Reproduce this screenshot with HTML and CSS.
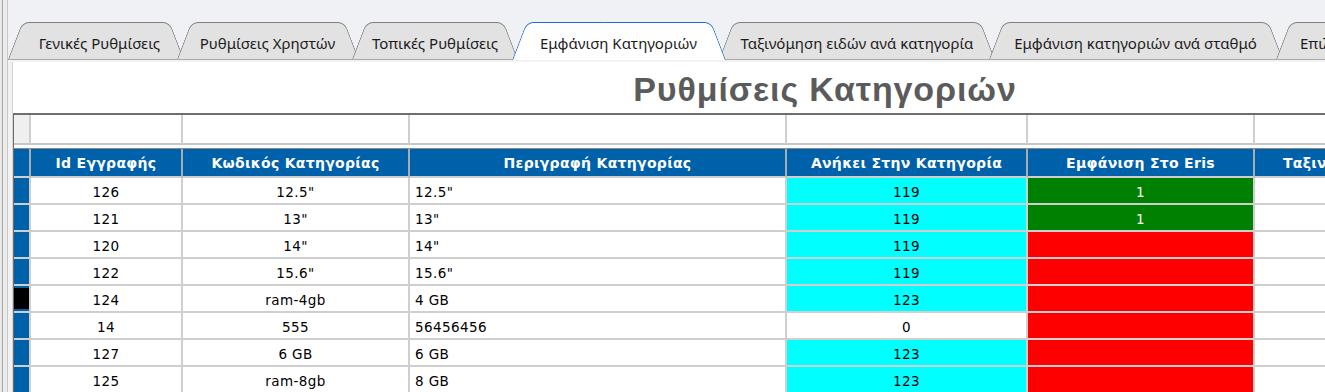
FILE: index.html
```html
<!DOCTYPE html>
<html lang="el">
<head>
<meta charset="utf-8">
<title>Ρυθμίσεις Κατηγοριών</title>
<link rel="stylesheet" href="styles.css">
</head>
<body>
<div class="app">
  <div class="sidebar"></div>
  <div class="tabcontrol">
    <div class="tabs">
      <div class="tab t1">Γενικές Ρυθμίσεις</div>
      <div class="tab t2">Ρυθμίσεις Χρηστών</div>
      <div class="tab t3">Τοπικές Ρυθμίσεις</div>
      <div class="tab t4 active">Εμφάνιση Κατηγοριών</div>
      <div class="tab t5">Ταξινόμηση ειδών ανά κατηγορία</div>
      <div class="tab t6">Εμφάνιση κατηγοριών ανά σταθμό</div>
      <div class="tab t7">Επιλογές</div>
    </div>
    <div class="page">
      <div class="content">
        <div class="title">Ρυθμίσεις Κατηγοριών</div>
        <div class="grid">
          <div class="row filter">
            <div class="cell ind"></div>
            <div class="cell"></div>
            <div class="cell"></div>
            <div class="cell"></div>
            <div class="cell"></div>
            <div class="cell"></div>
            <div class="cell"></div>
          </div>
          <div class="spacer"></div>
          <div class="row head">
            <div class="cell ind"></div>
            <div class="cell">Id Εγγραφής</div>
            <div class="cell">Κωδικός Κατηγορίας</div>
            <div class="cell">Περιγραφή Κατηγορίας</div>
            <div class="cell">Ανήκει Στην Κατηγορία</div>
            <div class="cell">Εμφάνιση Στο Eris</div>
            <div class="cell left">Ταξινόμηση</div>
          </div>
          <div class="row body">
            <div class="cell ind"></div>
            <div class="cell">126</div>
            <div class="cell">12.5"</div>
            <div class="cell desc">12.5"</div>
            <div class="cell cyan">119</div>
            <div class="cell green">1</div>
            <div class="cell"></div>
          </div>
          <div class="row body">
            <div class="cell ind"></div>
            <div class="cell">121</div>
            <div class="cell">13"</div>
            <div class="cell desc">13"</div>
            <div class="cell cyan">119</div>
            <div class="cell green">1</div>
            <div class="cell"></div>
          </div>
          <div class="row body">
            <div class="cell ind"></div>
            <div class="cell">120</div>
            <div class="cell">14"</div>
            <div class="cell desc">14"</div>
            <div class="cell cyan">119</div>
            <div class="cell red"></div>
            <div class="cell"></div>
          </div>
          <div class="row body">
            <div class="cell ind"></div>
            <div class="cell">122</div>
            <div class="cell">15.6"</div>
            <div class="cell desc">15.6"</div>
            <div class="cell cyan">119</div>
            <div class="cell red"></div>
            <div class="cell"></div>
          </div>
          <div class="row body">
            <div class="cell ind current"></div>
            <div class="cell">124</div>
            <div class="cell">ram-4gb</div>
            <div class="cell desc">4 GB</div>
            <div class="cell cyan">123</div>
            <div class="cell red"></div>
            <div class="cell"></div>
          </div>
          <div class="row body">
            <div class="cell ind"></div>
            <div class="cell">14</div>
            <div class="cell">555</div>
            <div class="cell desc">56456456</div>
            <div class="cell">0</div>
            <div class="cell red"></div>
            <div class="cell"></div>
          </div>
          <div class="row body">
            <div class="cell ind"></div>
            <div class="cell">127</div>
            <div class="cell">6 GB</div>
            <div class="cell desc">6 GB</div>
            <div class="cell cyan">123</div>
            <div class="cell red"></div>
            <div class="cell"></div>
          </div>
          <div class="row body">
            <div class="cell ind"></div>
            <div class="cell">125</div>
            <div class="cell">ram-8gb</div>
            <div class="cell desc">8 GB</div>
            <div class="cell cyan">123</div>
            <div class="cell red"></div>
            <div class="cell"></div>
          </div>
        </div>
      </div>
    </div>
  </div>
</div>
</body>
</html>
```

FILE: styles.css
```css
* { box-sizing: border-box; }

html, body {
  margin: 0;
  padding: 0;
  height: 392px;
  overflow: hidden;
  background: #f0f1f4;
}

.app {
  display: flex;
  height: 392px;
  width: 1700px;
}

.sidebar {
  width: 8px;
  flex: none;
  background: linear-gradient(to right, #e9e9e9 0 2px, #a6a6a6 2px 3px, #ececec 3px 7px, #c6c6c6 7px 8px);
}

.tabcontrol {
  flex: 1;
  display: flex;
  flex-direction: column;
  min-width: 0;
}

/* ---------- tabs ---------- */
.tabs {
  display: flex;
  align-items: flex-end;
  height: 59px;
  padding-top: 22px;
  position: relative;
  z-index: 3;
}

.tab {
  position: relative;
  z-index: 1;
  flex: none;
  height: 37px;
  margin-left: -6px;
  display: flex;
  align-items: center;
  justify-content: center;
  padding-top: 4px;
  font-family: "Noto Sans", "DejaVu Sans", sans-serif;
  font-size: 15px;
  color: #1c1c1c;
  white-space: nowrap;
}

.tab::before,
.tab::after {
  content: "";
  position: absolute;
  top: 0;
  bottom: 0;
  z-index: -1;
  background: #e2e2e2;
  border: 1px solid #7e7e7e;
  border-bottom: none;
  transform-origin: bottom;
}

.tab::before {
  left: 0;
  right: 50%;
  border-right: none;
  border-radius: 7px 0 0 0;
  transform: skewX(-21deg);
}

.tab::after {
  left: 50%;
  right: 0;
  border-left: none;
  border-radius: 0 7px 0 0;
  transform: skewX(21deg);
}

.tab.active {
  z-index: 2;
  height: 38px;
  margin-bottom: -1px;
  padding-top: 3px;
}

.tab.active::before,
.tab.active::after {
  background: #ffffff;
  border-color: #1f6cc0;
  border-width: 1.5px;
}

.t1 { margin-left: 0; width: 175px; padding-left: 8px; }
.t2 { width: 181px; }
.t3 { width: 166px; }
.t4 { width: 213px; }
.t5 { width: 276px; }
.t6 { width: 293px; }
.t7 { width: 140px; justify-content: flex-start; padding-left: 24px; }

/* ---------- page ---------- */
.page {
  flex: 1;
  border-top: 1px solid #a9a9a9;
  background: #f2f2f2;
  padding: 2px 0 0 4px;
}

.content {
  height: 100%;
  background: #ffffff;
  border-left: 1px solid #d4d4d4;
}

.title {
  width: 1624px;
  height: 51px;
  padding-top: 8px;
  text-align: center;
  font-family: "Liberation Sans", Arial, sans-serif;
  font-weight: bold;
  font-size: 34px;
  letter-spacing: 0.9px;
  line-height: 38px;
  color: #5b5b5b;
}

/* ---------- grid ---------- */
.grid {
  border-top: 2px solid #6e6e6e;
  border-left: 1px solid #6e6e6e;
  font-family: "DejaVu Sans", Verdana, sans-serif;
  font-size: 13.5px;
  letter-spacing: 0.4px;
  color: #000000;
}

.row {
  display: grid;
  grid-template-columns: 17px 152px 227px 377px 241px 227px 300px;
}

.cell {
  border-right: 2px solid #cfcfcf;
  border-bottom: 2px solid #cfcfcf;
  text-align: center;
  white-space: nowrap;
  overflow: hidden;
}

.filter .cell {
  height: 30px;
  border-bottom-color: #c6c6c6;
}

.filter .ind {
  background: #efefef;
}

.spacer {
  height: 3px;
  background: #ffffff;
}

.head {
  border-top: 1px solid #8a8a8a;
}

.head .cell {
  height: 29px;
  padding-top: 2px;
  background: #0061ab;
  color: #ffffff;
  font-weight: bold;
  font-size: 14px;
  letter-spacing: 0.3px;
  line-height: 25px;
  border-right-color: #a9adb2;
  border-bottom-color: #cfcfcf;
}

.head .cell.left {
  text-align: left;
  padding-left: 28px;
}

.body .cell {
  height: 27px;
  line-height: 25px;
  padding-top: 2px;
}

.body .ind {
  background: #0061ab;
}

.body .ind.current {
  background: #000000;
  box-shadow: inset 0 2px 0 #0061ab, inset 0 -2px 0 #0061ab;
}

.body .desc {
  text-align: left;
  padding-left: 5px;
}

.cyan { background: #00ffff; }
.green { background: #008000; color: #fffff0; }
.red { background: #ff0000; }
```
